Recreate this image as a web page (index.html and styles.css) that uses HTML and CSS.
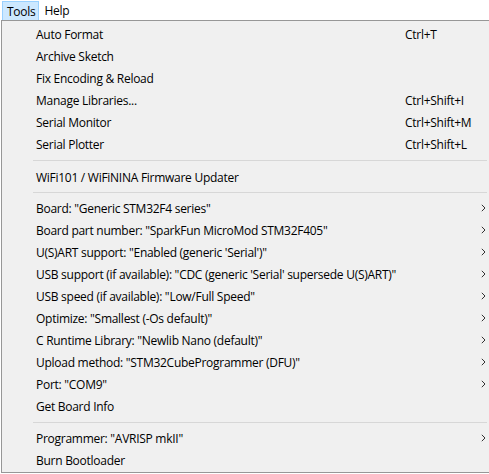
FILE: index.html
```html
<!DOCTYPE html>
<html>
<head>
<meta charset="utf-8">
<link rel="stylesheet" href="styles.css">
</head>
<body>
<div class="menubar">
  <span class="top-item active">Tools</span>
  <span class="top-item">Help</span>
</div>
<div class="menu">
  <div class="item"><span class="label">Auto Format</span><span class="key">Ctrl+T</span></div>
  <div class="item"><span class="label">Archive Sketch</span></div>
  <div class="item"><span class="label">Fix Encoding &amp; Reload</span></div>
  <div class="item"><span class="label">Manage Libraries...</span><span class="key">Ctrl+Shift+I</span></div>
  <div class="item"><span class="label">Serial Monitor</span><span class="key">Ctrl+Shift+M</span></div>
  <div class="item"><span class="label">Serial Plotter</span><span class="key">Ctrl+Shift+L</span></div>
  <div class="sep sep1"></div>
  <div class="item"><span class="label">WiFi101 / WiFiNINA Firmware Updater</span></div>
  <div class="sep"></div>
  <div class="item sub"><span class="label">Board: "Generic STM32F4 series"</span><svg class="arrow" width="5" height="8" viewBox="0 0 5 8"><path d="M0.8 0.8 L4 4 L0.8 7.2" fill="none" stroke="#333" stroke-width="1"/></svg></div>
  <div class="item sub"><span class="label">Board part number: "SparkFun MicroMod STM32F405"</span><svg class="arrow" width="5" height="8" viewBox="0 0 5 8"><path d="M0.8 0.8 L4 4 L0.8 7.2" fill="none" stroke="#333" stroke-width="1"/></svg></div>
  <div class="item sub"><span class="label">U(S)ART support: "Enabled (generic 'Serial')"</span><svg class="arrow" width="5" height="8" viewBox="0 0 5 8"><path d="M0.8 0.8 L4 4 L0.8 7.2" fill="none" stroke="#333" stroke-width="1"/></svg></div>
  <div class="item sub"><span class="label">USB support (if available): "CDC (generic 'Serial' supersede U(S)ART)"</span><svg class="arrow" width="5" height="8" viewBox="0 0 5 8"><path d="M0.8 0.8 L4 4 L0.8 7.2" fill="none" stroke="#333" stroke-width="1"/></svg></div>
  <div class="item sub"><span class="label">USB speed (if available): "Low/Full Speed"</span><svg class="arrow" width="5" height="8" viewBox="0 0 5 8"><path d="M0.8 0.8 L4 4 L0.8 7.2" fill="none" stroke="#333" stroke-width="1"/></svg></div>
  <div class="item sub"><span class="label">Optimize: "Smallest (-Os default)"</span><svg class="arrow" width="5" height="8" viewBox="0 0 5 8"><path d="M0.8 0.8 L4 4 L0.8 7.2" fill="none" stroke="#333" stroke-width="1"/></svg></div>
  <div class="item sub"><span class="label">C Runtime Library: "Newlib Nano (default)"</span><svg class="arrow" width="5" height="8" viewBox="0 0 5 8"><path d="M0.8 0.8 L4 4 L0.8 7.2" fill="none" stroke="#333" stroke-width="1"/></svg></div>
  <div class="item sub"><span class="label">Upload method: "STM32CubeProgrammer (DFU)"</span><svg class="arrow" width="5" height="8" viewBox="0 0 5 8"><path d="M0.8 0.8 L4 4 L0.8 7.2" fill="none" stroke="#333" stroke-width="1"/></svg></div>
  <div class="item sub"><span class="label">Port: "COM9"</span><svg class="arrow" width="5" height="8" viewBox="0 0 5 8"><path d="M0.8 0.8 L4 4 L0.8 7.2" fill="none" stroke="#333" stroke-width="1"/></svg></div>
  <div class="item"><span class="label">Get Board Info</span></div>
  <div class="sep sep3"></div>
  <div class="item sub"><span class="label">Programmer: "AVRISP mkII"</span><svg class="arrow" width="5" height="8" viewBox="0 0 5 8"><path d="M0.8 0.8 L4 4 L0.8 7.2" fill="none" stroke="#333" stroke-width="1"/></svg></div>
  <div class="item"><span class="label">Burn Bootloader</span></div>
</div>
</body>
</html>
```
FILE: styles.css
```css
html, body {
  margin: 0;
  padding: 0;
  background: #ffffff;
  overflow: hidden;
}
body {
  width: 489px;
  height: 474px;
  font-family: "Open Sans", "Noto Sans", sans-serif;
  font-size: 12px;
  letter-spacing: -0.27px;
  color: #000;
}
.menubar {
  height: 20px;
  display: flex;
  align-items: stretch;
  padding-left: 2px;
  background: #fff;
}
.top-item {
  display: flex;
  align-items: center;
  padding: 0 3px 0 4px;
  border: 1px solid transparent;
  margin-top: 1px;
}
.top-item.active {
  background: #cce8ff;
  border-color: #99d1ff;
  border-bottom: none;
}
.menu {
  margin-left: 1px;
  width: 500px;
  height: 453px;
  box-sizing: border-box;
  background: #f0f0f0;
  border: 1px solid #979797;
  padding: 2px 0;
  display: flex;
  flex-direction: column;
}
.item {
  height: 22px;
  display: flex;
  align-items: center;
  position: relative;
  padding-left: 34px;
  flex: none;
}
.label {
  white-space: nowrap;
}
.key {
  position: absolute;
  left: 403px;
}
.arrow {
  position: absolute;
  left: 479px;
  top: 7px;
}
.sep {
  height: 1px;
  background: #d7d7d7;
  margin: 4px 0 4px 31px;
  width: 454px;
  flex: none;
}
.sep1 {
  margin: 5px 0 5px 31px;
}
.sep3 {
  margin: 5px 0 4px 31px;
}
```
